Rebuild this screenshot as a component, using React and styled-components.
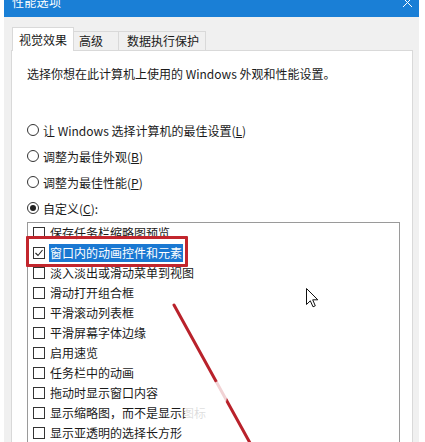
import React from "react";
import styled, { createGlobalStyle } from "styled-components";

const Global = createGlobalStyle`
  html, body { margin: 0; padding: 0; background: #ffffff; }
  * { box-sizing: border-box; }
`;

const Stage = styled.div`
  position: relative;
  width: 425px;
  height: 442px;
  overflow: hidden;
  background: #ffffff;
  font-family: "Noto Sans CJK SC", "Noto Sans", sans-serif;
  font-size: 12px;
  color: #1a1a1a;
`;

const Window = styled.div`
  margin: -13px 0 0 4px;
  width: 415px;
  height: 470px;
  background: #f0f0f0;
  display: flex;
  flex-direction: column;
`;

const TitleBar = styled.div`
  height: 30px;
  flex: none;
  background: #1a7fd6;
  color: #ffffff;
  display: flex;
  align-items: center;
  justify-content: space-between;
  padding: 0 5px 0 8px;
`;

const Title = styled.span`
  font-size: 12px;
  line-height: 30px;
  letter-spacing: 0.3px;
`;

const Close = styled.svg`
  width: 11px;
  height: 11px;
  margin-right: 1px;
`;

const Body = styled.div`
  flex: 1;
  display: flex;
  flex-direction: column;
  padding: 10px 6px 0 7px;
`;

const TabRow = styled.div`
  height: 23px;
  display: flex;
  align-items: flex-end;
  padding-left: 1px;
`;

const Tab = styled.div`
  position: relative;
  z-index: ${(p) => (p.$active ? 2 : 1)};
  height: ${(p) => (p.$active ? 24 : 19)}px;
  margin-bottom: ${(p) => (p.$active ? -1 : 0)}px;
  margin-left: ${(p) => (p.$first ? 0 : -1)}px;
  padding: 0 ${(p) => p.$pr}px 0 ${(p) => p.$pl}px;
  border: 1px solid #d9d9d9;
  border-bottom: none;
  background: ${(p) => (p.$active ? "#ffffff" : "#f0f0f0")};
  line-height: ${(p) => (p.$active ? 23 : 18)}px;
  white-space: nowrap;
  color: #1a1a1a;
`;

const Panel = styled.div`
  flex: 1;
  background: #ffffff;
  border: 1px solid #d9d9d9;
  padding: 13px 12px 0 15px;
  display: flex;
  flex-direction: column;
`;

const Intro = styled.div`
  line-height: 20px;
  white-space: nowrap;
`;

const RadioGroup = styled.div`
  margin-top: 33px;
  display: flex;
  flex-direction: column;
`;

const RadioRow = styled.div`
  height: 26px;
  display: flex;
  align-items: center;
  gap: 4px;
  white-space: nowrap;
`;

const RadioCircle = styled.span`
  width: 12px;
  height: 12px;
  border-radius: 50%;
  border: 1px solid #333333;
  display: flex;
  align-items: center;
  justify-content: center;
  flex: none;
  &::after {
    content: "";
    width: 6px;
    height: 6px;
    border-radius: 50%;
    background: ${(p) => (p.$on ? "#222222" : "transparent")};
  }
`;

const U = styled.span`
  text-decoration: underline;
  text-underline-offset: 1px;
`;

const ListBox = styled.div`
  margin-top: 1px;
  width: 373px;
  height: 260px;
  border: 1px solid #9a9a9a;
  display: flex;
  flex-direction: column;
`;

const Item = styled.div`
  height: 20px;
  display: flex;
  align-items: center;
  padding-left: 5px;
  gap: 4px;
  white-space: nowrap;
`;

const Box = styled.span`
  width: 12px;
  height: 12px;
  border: 1px solid #333333;
  flex: none;
  display: flex;
  align-items: center;
  justify-content: center;
`;

const Label = styled.span`
  line-height: 18px;
  padding: 0 1px;
  background: ${(p) => (p.$selected ? "#1a78d2" : "transparent")};
  color: ${(p) => (p.$selected ? "#ffffff" : "#1a1a1a")};
`;

const RedBox = styled.div`
  position: absolute;
  left: 26px;
  top: 236px;
  width: 162px;
  height: 31px;
  border: 3px solid #c2262d;
  border-radius: 1px;
`;

const Overlay = styled.svg`
  position: absolute;
  left: 0;
  top: 0;
  width: 425px;
  height: 442px;
  pointer-events: none;
`;

const items = [
  { t: "保存任务栏缩略图预览" },
  { t: "窗口内的动画控件和元素", checked: true, selected: true },
  { t: "淡入淡出或滑动菜单到视图" },
  { t: "滑动打开组合框" },
  { t: "平滑滚动列表框" },
  { t: "平滑屏幕字体边缘" },
  { t: "启用速览" },
  { t: "任务栏中的动画" },
  { t: "拖动时显示窗口内容" },
  { t: "显示缩略图，而不是显示图标" },
  { t: "显示亚透明的选择长方形" },
  { t: "在窗口下显示阴影" },
];

export default function App() {
  return (
    <Stage>
      <Global />
      <Window>
        <TitleBar>
          <Title>性能选项</Title>
          <Close viewBox="0 0 11 11">
            <path d="M1 1 L10 10 M10 1 L1 10" stroke="#ffffff" strokeWidth="1" fill="none" />
          </Close>
        </TitleBar>
        <Body>
          <TabRow>
            <Tab $active $first $pl={6} $pr={6}>视觉效果</Tab>
            <Tab $pl={5} $pr={15}>高级</Tab>
            <Tab $pl={8} $pr={6}>数据执行保护</Tab>
          </TabRow>
          <Panel>
            <Intro>选择你想在此计算机上使用的 Windows 外观和性能设置。</Intro>
            <RadioGroup>
              <RadioRow>
                <RadioCircle />
                <span>让 Windows 选择计算机的最佳设置(<U>L</U>)</span>
              </RadioRow>
              <RadioRow>
                <RadioCircle />
                <span>调整为最佳外观(<U>B</U>)</span>
              </RadioRow>
              <RadioRow>
                <RadioCircle />
                <span>调整为最佳性能(<U>P</U>)</span>
              </RadioRow>
              <RadioRow>
                <RadioCircle $on />
                <span>自定义(<U>C</U>):</span>
              </RadioRow>
            </RadioGroup>
            <ListBox>
              {items.map((it) => (
                <Item key={it.t}>
                  <Box>
                    {it.checked && (
                      <svg width="10" height="10" viewBox="0 0 10 10">
                        <path d="M1.5 5 L4 7.5 L8.5 2" stroke="#222" strokeWidth="1.1" fill="none" />
                      </svg>
                    )}
                  </Box>
                  <Label $selected={it.selected}>{it.t}</Label>
                </Item>
              ))}
            </ListBox>
          </Panel>
        </Body>
      </Window>
      <RedBox />
      <Overlay viewBox="0 0 425 442">
        <line x1="174" y1="305" x2="255" y2="452" stroke="#b9222b" strokeWidth="3" strokeLinecap="round" />
        <path d="M184 404 L214 402 L218 414 L206 423 L186 421 Z" fill="#ffffff" opacity="0.85" />
        <path d="M212 384 L222 379 L229 388 L226 402 L215 397 Z" fill="#ffffff" opacity="0.8" />
        <path
          d="M306.5 288.5 L306.5 304.5 L310.3 300.8 L313 306.8 L315.3 305.8 L312.7 299.8 L317.8 299.8 Z"
          fill="#ffffff"
          stroke="#111111"
          strokeWidth="1"
          strokeLinejoin="round"
        />
      </Overlay>
    </Stage>
  );
}
